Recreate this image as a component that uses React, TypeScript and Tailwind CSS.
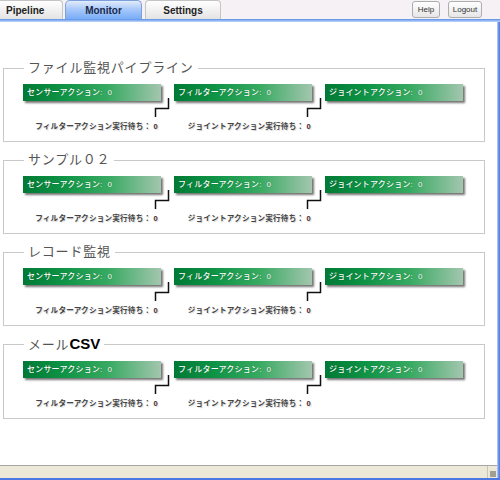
import React from 'react';

type Pipeline = { name: React.ReactNode };

const pipelines: Pipeline[] = [
    { name: 'ファイル監視パイプライン' },
    { name: 'サンプル０２' },
    { name: 'レコード監視' },
    {
        name: (
            <>
                メール<span className="font-['Liberation_Sans',sans-serif] text-[15px] font-semibold text-black tracking-normal">CSV</span>
            </>
        ),
    },
];

const jp = "font-['Liberation_Sans','Noto_Sans_CJK_JP',sans-serif]";

const ActionBar: React.FC<{ label: string; count: number }> = ({ label, count }) => (
    <div className="w-[138px] h-[17px] flex items-center pl-[4px] bg-[linear-gradient(to_right,#007a35_0%,#0f9446_30%,#38aa62_62%,#a3c6ae_100%)] shadow-[2px_2px_2px_rgba(0,0,0,0.55)]">
        <span className="text-[8px] leading-none text-white font-medium tracking-[0.2px] [text-shadow:0_0_1px_rgba(0,60,20,0.6)]">
            {label}:&nbsp;&nbsp;{count}
        </span>
    </div>
);

const Connector: React.FC = () => (
    <svg width="16" height="19" viewBox="0 0 16 19" className="block">
        <path d="M14.5 0 V10.5 H1.5 V19" fill="none" stroke="#111" strokeWidth="1.5" />
    </svg>
);

const WaitLabel: React.FC<{ label: string; count: number }> = ({ label, count }) => (
    <div className="text-[7.6px] leading-[10px] text-right font-semibold tracking-[0.2px] text-[#444] [text-shadow:1px_1px_1px_rgba(0,0,0,0.15)]">
        {label}：&nbsp;<span className="text-[#4a2a2a]">{count}</span>
    </div>
);

const PipelineBox: React.FC<Pipeline> = ({ name }) => (
    <fieldset className="ml-[3px] w-[482px] mb-[10px] border border-[#c9c9c9] pb-[9px]">
        <legend className="ml-[20px] px-[4px] text-[13px] leading-[16px] text-[#555] tracking-[0.8px]">{name}</legend>
        <div className="flex gap-[13px] pl-[19px] pt-[8px]">
            <ActionBar label="センサーアクション" count={0} />
            <ActionBar label="フィルターアクション" count={0} />
            <ActionBar label="ジョイントアクション" count={0} />
        </div>
        <div className="flex pl-[150px] mt-[-3px]">
            <Connector />
            <div className="ml-[136px]">
                <Connector />
            </div>
        </div>
        <div className="grid grid-cols-[138px_138px] gap-[13px] pl-[19px] mt-[5px]">
            <div className="pr-[3px]">
                <WaitLabel label="フィルターアクション実行待ち" count={0} />
            </div>
            <div className="pr-[1px]">
                <WaitLabel label="ジョイントアクション実行待ち" count={0} />
            </div>
        </div>
    </fieldset>
);

const App: React.FC = () => {
    return (
        <div className={`w-[500px] h-[480px] flex flex-col bg-white overflow-hidden ${jp}`}>
            {/* header tabs */}
            <div className="h-[19px] flex items-stretch bg-[#f6f1f4] font-['Liberation_Sans',sans-serif]">
                <div className="w-[63px] pl-[6px] flex items-center text-[10px] font-bold text-[#222] bg-[linear-gradient(#ffffff,#e4e4e4)] border-r border-t border-[#c4c4c4] rounded-tr-[4px]">
                    Pipeline
                </div>
                <div className="ml-[2px] w-[77px] flex items-center justify-center text-[10px] font-bold text-[#1b2a4a] bg-[linear-gradient(#e2ecfc,#a9c9fa_45%,#78adf7)] border border-b-0 border-[#7d9fdc] rounded-t-[5px]">
                    Monitor
                </div>
                <div className="ml-[3px] w-[76px] flex items-center justify-center text-[10px] font-bold text-[#222] bg-[linear-gradient(#ffffff,#e4e4e4)] border border-b-0 border-[#c4c4c4] rounded-t-[4px]">
                    Settings
                </div>
                <div className="ml-auto flex items-center gap-[8px] pr-[18px]">
                    <button className="w-[28px] h-[17px] text-[8px] text-[#333] bg-[linear-gradient(#ffffff,#e6e6e6)] border border-[#adadad] rounded-[3px]">
                        Help
                    </button>
                    <button className="w-[34px] h-[17px] text-[8px] text-[#333] bg-[linear-gradient(#ffffff,#e6e6e6)] border border-[#adadad] rounded-[3px]">
                        Logout
                    </button>
                </div>
            </div>
            <div className="h-[3px] bg-[linear-gradient(#5b8de6,#8fb4f2,#c3d8f8)]" />

            <div className="flex-1 flex min-h-0">
                <div className="flex-1 flex flex-col min-w-0">
                    <div className="flex-1 pt-[38px]">
                        {pipelines.map((p, i) => (
                            <PipelineBox key={i} name={p.name} />
                        ))}
                    </div>
                    {/* status bar */}
                    <div className="h-[13px] flex border-t border-[#a6a6a6] bg-[#ece9d8]">
                        <div className="flex-1" />
                        <div className="w-[10px] border-l border-[#c8c5b5] flex items-end justify-end pr-[1px] pb-[1px]">
                            <div className="w-[6px] h-[6px] bg-[radial-gradient(#9a9a8c_0.7px,transparent_0.8px)] bg-[length:2px_2px]" />
                        </div>
                    </div>
                </div>
                <div className="w-[3px] bg-[linear-gradient(to_right,#c3d4f7,#6e95ee,#4c78e4)]" />
            </div>
            <div className="h-[2px] bg-[#4c78e4]" />
        </div>
    );
};

export default App;
